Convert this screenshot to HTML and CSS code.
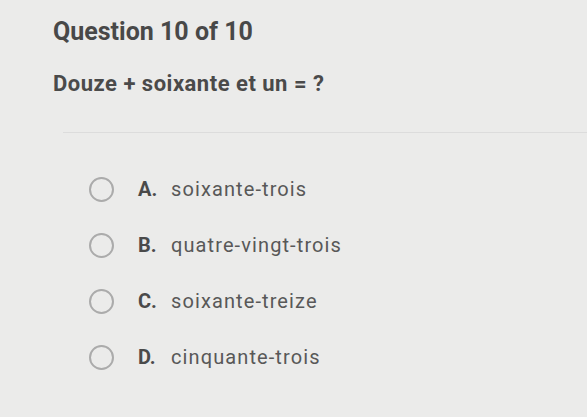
FILE: index.html
```html
<!DOCTYPE html>
<html>
<head>
<meta charset="utf-8">
<link rel="stylesheet" href="styles.css">
</head>
<body>
<div class="page">
  <h1 class="title">Question 10 of 10</h1>
  <p class="prompt">Douze + soixante et un = ?</p>
  <hr class="sep">
  <ul class="options">
    <li class="option"><span class="radio"></span><span class="letter">A.</span><span class="text">soixante-trois</span></li>
    <li class="option"><span class="radio"></span><span class="letter">B.</span><span class="text">quatre-vingt-trois</span></li>
    <li class="option"><span class="radio"></span><span class="letter">C.</span><span class="text">soixante-treize</span></li>
    <li class="option"><span class="radio"></span><span class="letter">D.</span><span class="text">cinquante-trois</span></li>
  </ul>
</div>
</body>
</html>
```
FILE: styles.css
```css
html, body {
  margin: 0;
  padding: 0;
  background: #ebebea;
  width: 587px;
  height: 417px;
  overflow: hidden;
}
.page {
  font-family: Roboto, "Liberation Sans", sans-serif;
  color: #4d4d4d;
  padding: 17px 0 0 53px;
}
.title {
  margin: 0;
  font-size: 25px;
  font-weight: 700;
  line-height: 30px;
  color: #484848;
}
.prompt {
  margin: 24px 0 0 0;
  font-size: 22px;
  font-weight: 700;
  line-height: 26px;
  color: #4a4a4a;
  letter-spacing: 0.5px;
}
.sep {
  margin: 35px 0 0 10px;
  border: 0;
  border-top: 1px solid #dcdcdc;
  height: 0;
}
.options {
  list-style: none;
  margin: 43px 0 0 0;
  padding: 0 0 0 36px;
  display: flex;
  flex-direction: column;
  gap: 30px;
}
.option {
  display: flex;
  align-items: center;
  height: 26px;
  font-size: 20px;
}
.radio {
  width: 25px;
  height: 25px;
  border: 2px solid #ababab;
  border-radius: 50%;
  box-sizing: border-box;
  flex: none;
}
.letter {
  margin-left: 24px;
  width: 33px;
  font-weight: 700;
  color: #4a4a4a;
}
.text {
  color: #585858;
  letter-spacing: 1.1px;
}
```
